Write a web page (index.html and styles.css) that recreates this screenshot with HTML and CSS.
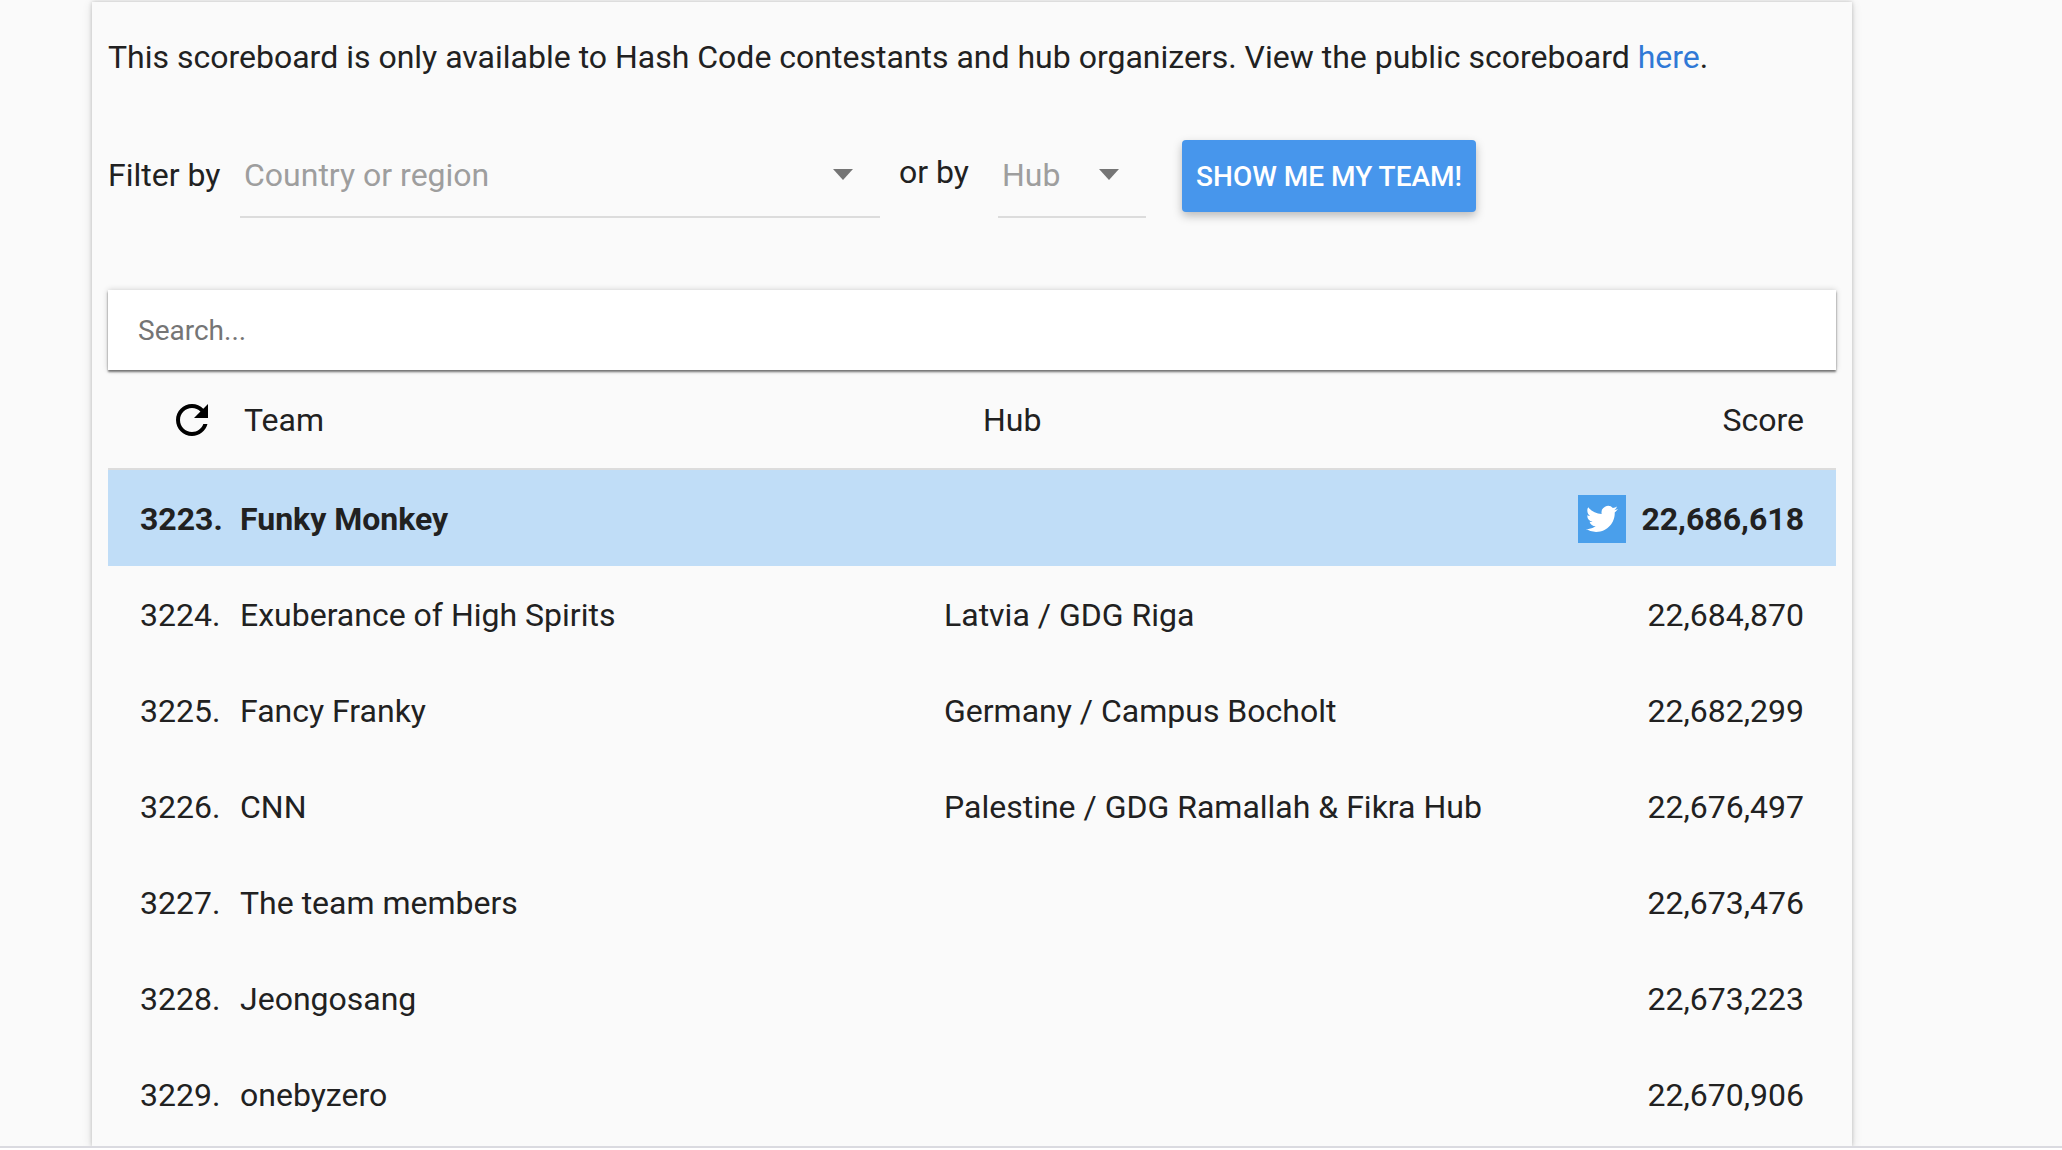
FILE: index.html
```html
<!DOCTYPE html>
<html lang="en">
<head>
<meta charset="utf-8">
<title>Hash Code scoreboard</title>
<link rel="stylesheet" href="styles.css">
</head>
<body>
<main class="panel">
  <p class="intro">This scoreboard is only available to Hash Code contestants and hub organizers. View the public scoreboard <a class="link" href="#public">here</a>.</p>
  <form class="filters">
    <label class="filter-label" for="country">Filter by</label>
    <div class="dropdown dropdown-country">
      <select id="country" class="dropdown-input"><option>Country or region</option></select>
      <span class="dropdown-arrow"></span>
    </div>
    <label class="or-label" for="hub">or by</label>
    <div class="dropdown dropdown-hub">
      <select id="hub" class="dropdown-input"><option>Hub</option></select>
      <span class="dropdown-arrow"></span>
    </div>
    <button class="team-button" type="button">SHOW ME MY TEAM!</button>
  </form>
  <input class="search" type="search" placeholder="Search..." aria-label="Search">
  <table class="scores">
    <thead>
      <tr>
        <th class="rank"><button class="refresh" type="button" aria-label="Refresh"><svg class="refresh-icon" viewBox="0 0 24 24"><path d="M17.65 6.35C16.2 4.9 14.21 4 12 4c-4.42 0-7.99 3.58-7.99 8s3.57 8 7.99 8c3.73 0 6.84-2.55 7.73-6h-2.08c-.82 2.33-3.04 4-5.65 4-3.31 0-6-2.69-6-6s2.69-6 6-6c1.66 0 3.14.69 4.22 1.78L13 11h7V4l-2.35 2.35z"/></svg></button></th>
        <th class="team">Team</th>
        <th class="hub">Hub</th>
        <th class="score">Score</th>
      </tr>
    </thead>
    <tbody>
      <tr class="mine"><td class="rank">3223.</td><td class="team">Funky Monkey</td><td class="hub"></td><td class="score"><div class="score-line"><a class="tweet" href="#tweet" aria-label="Share on Twitter"><svg class="tweet-icon" viewBox="0 0 24 24"><path d="M23.954 4.569a10 10 0 0 1-2.825.775 4.958 4.958 0 0 0 2.163-2.723c-.951.555-2.005.959-3.127 1.184a4.92 4.92 0 0 0-8.384 4.482C7.691 8.094 4.066 6.13 1.64 3.161a4.822 4.822 0 0 0-.666 2.475c0 1.71.87 3.213 2.188 4.096a4.904 4.904 0 0 1-2.228-.616v.061a4.923 4.923 0 0 0 3.946 4.827 4.996 4.996 0 0 1-2.212.085 4.937 4.937 0 0 0 4.604 3.417 9.868 9.868 0 0 1-6.102 2.105c-.39 0-.779-.023-1.17-.067a13.995 13.995 0 0 0 7.557 2.209c9.054 0 13.999-7.496 13.999-13.986 0-.209 0-.42-.015-.63a9.936 9.936 0 0 0 2.46-2.548z"/></svg></a>22,686,618</div></td></tr>
      <tr><td class="rank">3224.</td><td class="team">Exuberance of High Spirits</td><td class="hub">Latvia / GDG Riga</td><td class="score">22,684,870</td></tr>
      <tr><td class="rank">3225.</td><td class="team">Fancy Franky</td><td class="hub">Germany / Campus Bocholt</td><td class="score">22,682,299</td></tr>
      <tr><td class="rank">3226.</td><td class="team">CNN</td><td class="hub">Palestine / GDG Ramallah &amp; Fikra Hub</td><td class="score">22,676,497</td></tr>
      <tr><td class="rank">3227.</td><td class="team">The team members</td><td class="hub"></td><td class="score">22,673,476</td></tr>
      <tr><td class="rank">3228.</td><td class="team">Jeongosang</td><td class="hub"></td><td class="score">22,673,223</td></tr>
      <tr><td class="rank">3229.</td><td class="team">onebyzero</td><td class="hub"></td><td class="score">22,670,906</td></tr>
    </tbody>
  </table>
</main>
<footer class="bottom-bar"></footer>
</body>
</html>
```
FILE: styles.css
```css
* {
  box-sizing: border-box;
}

body {
  display: flex;
  flex-direction: column;
  min-height: 100vh;
  margin: 0;
  background: #fafafa;
  color: #212121;
  font: 32px/40px Roboto, sans-serif;
}

.panel {
  flex: 1;
  margin: 2px 210px 0 92px;
  padding: 35px 16px 4px;
  box-shadow: 0 2px 10px rgba(0, 0, 0, 0.12), 0 0 4px rgba(0, 0, 0, 0.2);
}

.intro {
  margin: 0;
}

.link {
  color: #3079d6;
  text-decoration: none;
}

.filters {
  display: flex;
  align-items: flex-start;
  margin: 61px 0 72px;
}

.filter-label {
  width: 132px;
  padding-top: 17px;
}

.or-label {
  width: 118px;
  padding: 14px 0 0 19px;
}

.dropdown {
  display: grid;
  align-items: center;
  height: 80px;
  border-bottom: 2px solid #dcdcdc;
}

.dropdown-country {
  width: 640px;
}

.dropdown-hub {
  width: 148px;
}

.dropdown-input {
  grid-area: 1 / 1;
  width: 100%;
  height: 78px;
  padding: 0 4px 4px;
  appearance: none;
  border: 0;
  background: none;
  color: #9e9e9e;
  font: inherit;
}

.dropdown-arrow {
  grid-area: 1 / 1;
  justify-self: end;
  margin: 0 27px 6px 0;
  border: 10px solid transparent;
  border-top: 11px solid #757575;
  border-bottom: 0;
  pointer-events: none;
}

.team-button {
  min-width: 294px;
  height: 72px;
  margin: 2px 0 0 36px;
  padding: 2px 12px 0;
  border: 0;
  border-radius: 4px;
  background: #4796ec;
  box-shadow: 0 4px 10px rgba(0, 0, 0, 0.26);
  color: #fff;
  font: 500 28px/36px Roboto, sans-serif;
}

.search {
  display: block;
  width: 100%;
  height: 80px;
  padding: 0 30px;
  appearance: none;
  border: 0;
  background: #fff;
  box-shadow: 0 2px 2px rgba(0, 0, 0, 0.5), 0 0 6px rgba(0, 0, 0, 0.18);
  color: inherit;
  font: 28px/36px Roboto, sans-serif;
}

.search::placeholder {
  color: #757575;
}

.scores {
  width: 100%;
  border-collapse: separate;
  border-spacing: 0;
  table-layout: fixed;
}

.scores th,
.scores td {
  height: 96px;
  padding: 2px 0 0;
  text-align: left;
  font-weight: 400;
}

.scores th {
  height: 100px;
  border-bottom: 2px solid #dcdcdc;
}

.scores .rank {
  width: 132px;
  padding-left: 32px;
}

.scores .team {
  width: 704px;
}

.scores th.rank {
  padding-left: 60px;
}

.scores th.team {
  padding-left: 4px;
}

.scores th.hub {
  padding-left: 39px;
}

.scores .score {
  width: 280px;
  padding-right: 32px;
  text-align: right;
}

.scores .mine {
  background: #c0ddf7;
}

.scores .mine td {
  font-weight: 700;
}

.refresh {
  display: block;
  padding: 0;
  border: 0;
  background: none;
}

.refresh-icon {
  display: block;
  width: 48px;
  height: 48px;
}

.score-line {
  display: flex;
  align-items: center;
  justify-content: flex-end;
  gap: 15px;
}

.tweet {
  display: flex;
  align-items: center;
  justify-content: center;
  width: 48px;
  height: 48px;
  background: #4a9feb;
}

.tweet-icon {
  width: 32px;
  height: 32px;
  fill: #fff;
}

.bottom-bar {
  position: relative;
  height: 4px;
  border-top: 2px solid #dadae0;
  background: #fff;
}
```
